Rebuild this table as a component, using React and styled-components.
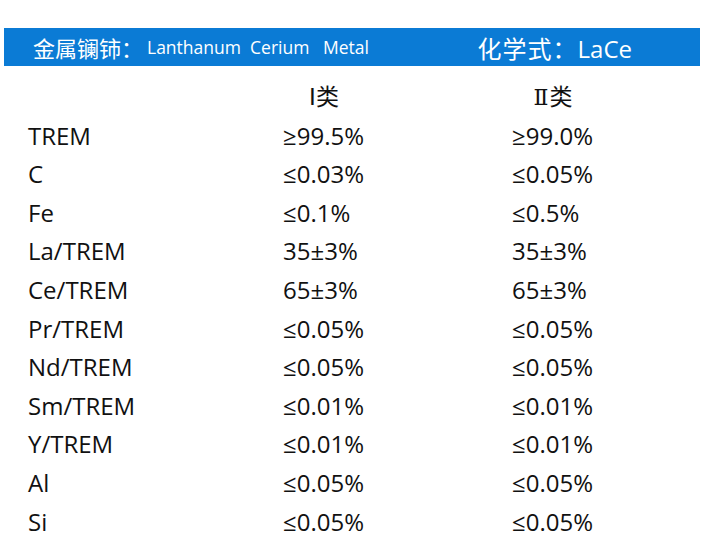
import React from 'react';
import styled, { createGlobalStyle } from 'styled-components';

const GlobalStyle = createGlobalStyle`
  html, body {
    margin: 0;
    padding: 0;
    background: #ffffff;
  }
  body {
    font-family: "Open Sans", "Noto Sans CJK SC", sans-serif;
    color: #111111;
  }
`;

const Page = styled.div`
  width: 708px;
  padding-top: 28px;
  box-sizing: border-box;
`;

const Banner = styled.div`
  margin-left: 4px;
  width: 696px;
  height: 38px;
  background: #0b7bd5;
  color: #ffffff;
  display: flex;
  align-items: center;
  box-sizing: border-box;
  padding-left: 29px;
`;

const CnTitle = styled.span`
  font-size: 22px;
  font-family: "Noto Sans CJK SC", sans-serif;
`;

const EnTitle = styled.span`
  font-size: 17.5px;
  white-space: pre;
  margin-left: 4px;
`;

const Formula = styled.span`
  margin-left: auto;
  margin-right: 68px;
  font-size: 24px;
  white-space: pre;
`;

const FormulaCn = styled.span`
  font-family: "Noto Sans CJK SC", sans-serif;
  font-size: 24px;
  letter-spacing: 1px;
`;

const Table = styled.div`
  margin-top: 12px;
  padding-left: 28px;
  display: grid;
  grid-template-columns: 255px 229px 1fr;
  grid-auto-rows: 38.6px;
  font-size: 24px;
  align-items: center;
`;

const Cell = styled.div`
  white-space: nowrap;
  line-height: 1.1;
`;

const HeadCell = styled.div`
  width: 82px;
  text-align: center;
  font-size: 23px;
  line-height: 1.1;
  font-family: "DejaVu Sans", "Noto Sans CJK SC", sans-serif;
`;

const Numeral = styled.span`
  font-family: "DejaVu Serif", serif;
  font-size: 22px;
  margin-right: 1px;
`;

const rows = [
  ['TREM', '≥99.5%', '≥99.0%'],
  ['C', '≤0.03%', '≤0.05%'],
  ['Fe', '≤0.1%', '≤0.5%'],
  ['La/TREM', '35±3%', '35±3%'],
  ['Ce/TREM', '65±3%', '65±3%'],
  ['Pr/TREM', '≤0.05%', '≤0.05%'],
  ['Nd/TREM', '≤0.05%', '≤0.05%'],
  ['Sm/TREM', '≤0.01%', '≤0.01%'],
  ['Y/TREM', '≤0.01%', '≤0.01%'],
  ['Al', '≤0.05%', '≤0.05%'],
  ['Si', '≤0.05%', '≤0.05%'],
];

export default function App() {
  return (
    <Page>
      <GlobalStyle />
      <Banner>
        <CnTitle>金属镧铈：</CnTitle>
        <EnTitle>Lanthanum  Cerium   Metal</EnTitle>
        <Formula>
          <FormulaCn>化学式：</FormulaCn>LaCe
        </Formula>
      </Banner>
      <Table>
        <Cell />
        <HeadCell>I类</HeadCell>
        <HeadCell>
          <Numeral>Ⅱ</Numeral>类
        </HeadCell>
        {rows.map((row) =>
          row.map((value, i) => <Cell key={row[0] + i}>{value}</Cell>)
        )}
      </Table>
    </Page>
  );
}
